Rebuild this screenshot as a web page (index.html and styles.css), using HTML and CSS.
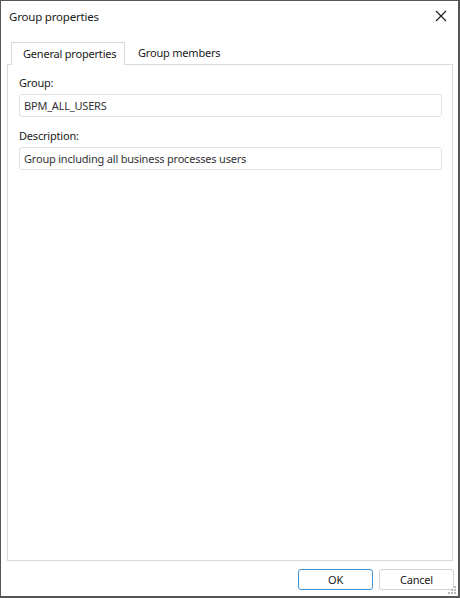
FILE: index.html
```html
<!DOCTYPE html>
<html lang="en">
<head>
    <meta charset="UTF-8">
    <meta name="viewport" content="width=device-width, initial-scale=1.0">
    <title>Group properties</title>
    <link rel="stylesheet" href="styles.css">
</head>
<body>
    <div class="dialog">
        <div class="titlebar">
            <span class="title">Group properties</span>
            <button class="close-btn" aria-label="Close">
                <svg width="12" height="12" viewBox="0 0 12 12">
                    <path d="M1 1 L11 11 M11 1 L1 11" stroke="#1a1a1a" stroke-width="1.1" fill="none"/>
                </svg>
            </button>
        </div>

        <div class="tabs">
            <div class="tab active">General properties</div>
            <div class="tab">Group members</div>
        </div>

        <div class="panel">
            <label class="field-label">Group:</label>
            <div class="field">BPM_ALL_USERS</div>

            <label class="field-label">Description:</label>
            <div class="field">Group including all business processes users</div>
        </div>

        <div class="footer">
            <button class="btn btn-default">OK</button>
            <button class="btn">Cancel</button>
        </div>

        <svg class="grip" width="9" height="9" viewBox="0 0 9 9">
            <rect x="6" y="0" width="2" height="2" fill="#b8b8b8"/>
            <rect x="3" y="3" width="2" height="2" fill="#b8b8b8"/>
            <rect x="6" y="3" width="2" height="2" fill="#b8b8b8"/>
            <rect x="0" y="6" width="2" height="2" fill="#b8b8b8"/>
            <rect x="3" y="6" width="2" height="2" fill="#b8b8b8"/>
            <rect x="6" y="6" width="2" height="2" fill="#b8b8b8"/>
        </svg>
    </div>
</body>
</html>
```

FILE: styles.css
```css
:root {
    --window-border: #565656;
    --panel-border: #d9d9d6;
    --field-border: #e1e1e1;
    --accent: #3f93d3;
    --text: #1a1a1a;
    --text-field: #333333;
}

* {
    margin: 0;
    padding: 0;
    box-sizing: border-box;
}

body {
    font-family: "Noto Sans", "Open Sans", sans-serif;
    font-size: 11px;
    letter-spacing: -0.2px;
    color: var(--text);
    background-color: #ffffff;
}

.dialog {
    position: relative;
    width: 460px;
    height: 598px;
    display: flex;
    flex-direction: column;
    background-color: #ffffff;
    border-style: solid;
    border-color: var(--window-border);
    border-width: 1px 2px 2px 1px;
}

.titlebar {
    height: 30px;
    display: flex;
    align-items: center;
    justify-content: space-between;
    padding: 0 6px 0 8px;
}

.title {
    font-size: 11.5px;
}

.close-btn {
    width: 14px;
    height: 14px;
    display: flex;
    align-items: center;
    justify-content: center;
    background: none;
    border: none;
    margin-right: 4px;
}

.tabs {
    display: flex;
    margin: 11px 0 0 10px;
    height: 22px;
}

.tab {
    height: 22px;
    line-height: 21px;
    padding: 0 13px;
    white-space: nowrap;
}

.tab.active {
    position: relative;
    z-index: 1;
    width: 114px;
    height: 23px;
    padding: 0 11px;
    background-color: #ffffff;
    border: 1px solid var(--panel-border);
    border-bottom: none;
}

.panel {
    flex: 1;
    margin: 0 5px 0 6px;
    border: 1px solid var(--panel-border);
    padding: 9px 10px 0 11px;
    display: flex;
    flex-direction: column;
}

.field-label {
    display: block;
    line-height: 17px;
    margin-bottom: 3px;
}

.field {
    height: 23px;
    line-height: 21px;
    padding: 0 4px;
    border: 1px solid var(--field-border);
    border-radius: 3px;
    color: var(--text-field);
    margin-bottom: 10px;
    white-space: nowrap;
    overflow: hidden;
}

.footer {
    height: 35px;
    display: flex;
    justify-content: flex-end;
    gap: 6px;
    padding: 8px 4px 0 0;
}

.btn {
    width: 75px;
    height: 21px;
    background-color: #ffffff;
    border: 1px solid #d3d3d3;
    border-radius: 3px;
    font-family: inherit;
    font-size: 11px;
    letter-spacing: -0.2px;
    color: var(--text);
}

.btn-default {
    border-color: var(--accent);
}

.grip {
    position: absolute;
    right: 1px;
    bottom: 1px;
}
```
